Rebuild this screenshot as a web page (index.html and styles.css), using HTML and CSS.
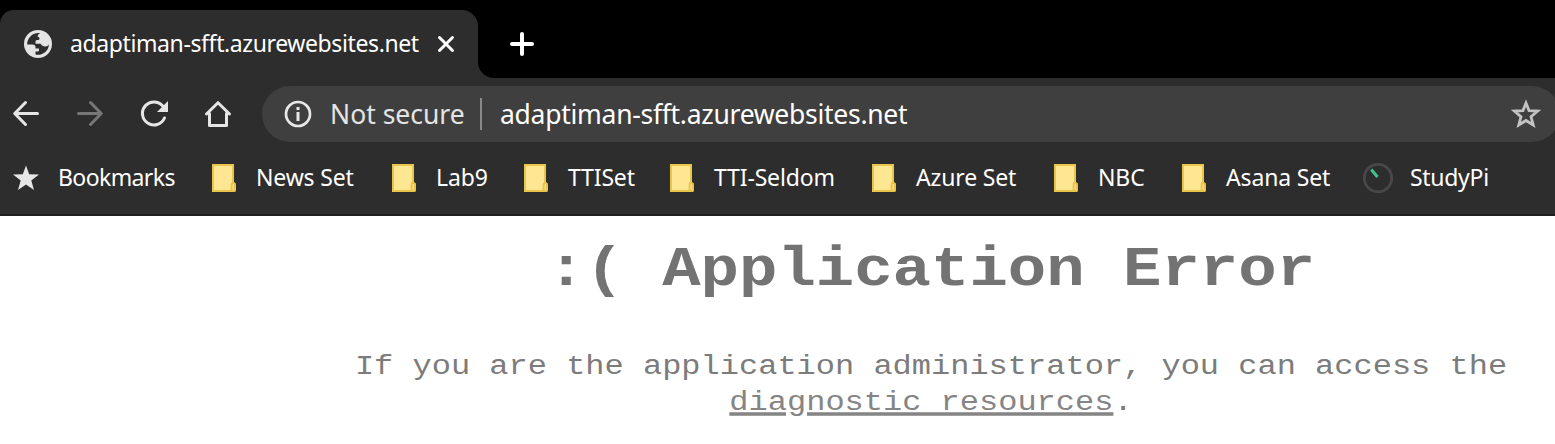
FILE: index.html
```html
<!DOCTYPE html>
<html lang="en">
<head>
<meta charset="utf-8">
<title>adaptiman-sfft.azurewebsites.net</title>
<link rel="stylesheet" href="styles.css">
</head>
<body>
<svg class="defs" width="0" height="0" aria-hidden="true">
  <symbol id="folder" viewBox="0 0 24 28">
    <path d="M1 1H21V19.500H22Q23 19.500 23 21V26Q23 27 22 27H1Z" fill="#ffe692" stroke="#eac54c" stroke-width="2"/>
    <path d="M19.500 26V21Q19.500 19 21 19H22Q23 19.500 23 21V26Q23 27 22 27H20.500Q19.500 27 19.500 26Z" fill="#fbdc7a" stroke="#e8c44b" stroke-width="1.800"/>
  </symbol>
</svg>
<header class="browser">
  <div class="tabs">
    <div class="tab">
      <svg class="globe" width="28" height="28" viewBox="0 0 28 28"><circle cx="14" cy="14" r="14" fill="#e4e4e4"/><path d="M16 3.200C9.500 2.400 4.500 6.500 3.200 13V14.500H8.500Q11.500 14.500 11.500 17V18.500H15V20.500Q15 21.500 13.500 21.500H11.500V24.600C18.500 26 24.800 21 24.900 14.500Q23.500 17 20.500 16.500Q17.500 16 16.500 13.800H11.500V11.500Q11.500 10 13 10H14.500Q15.800 9.700 15.500 8Q15.200 7 13.500 6.500Q13.800 4 16 3.200Z" fill="#2d2d2d"/></svg>
      <span class="tab-title">adaptiman-sfft.azurewebsites.net</span>
      <svg class="close" width="18" height="18" viewBox="0 0 18 18"><path d="M2.500 2.500L15.500 15.500M15.500 2.500L2.500 15.500" stroke="#fff" stroke-width="3" stroke-linecap="round"/></svg>
    </div>
    <div class="tab-side">
      <svg width="24" height="24" viewBox="0 0 24 24"><path d="M12 2V22M2 12H22" stroke="#fff" stroke-width="4" stroke-linecap="round"/></svg>
    </div>
  </div>
  <div class="toolbar">
    <div class="nav">
      <svg width="28" height="28" viewBox="0 0 28 28" fill="none" stroke="#e6e6e6" stroke-width="3" stroke-linecap="round" stroke-linejoin="round"><path d="M25.500 13.500H3M13.500 2.500L2.700 13.500L13.500 24.500"/></svg>
      <svg width="28" height="28" viewBox="0 0 28 28" fill="none" stroke="#777" stroke-width="3" stroke-linecap="round" stroke-linejoin="round"><path d="M2.500 13.500H25M14.500 2.500L25.300 13.500L14.500 24.500"/></svg>
      <svg width="28" height="28" viewBox="0 0 28 28"><path d="M23.300 6.700A11.500 11.500 0 1 0 24.500 18" fill="none" stroke="#e6e6e6" stroke-width="3" stroke-linecap="round"/><path d="M28 1V12H17Z" fill="#e6e6e6"/></svg>
      <svg width="28" height="28" viewBox="0 0 28 28" fill="none" stroke="#e6e6e6" stroke-width="3" stroke-linecap="round" stroke-linejoin="round"><path d="M2.500 14L14 2.700L25.500 14M5.500 13.500V25.500H22.500V13.500"/></svg>
    </div>
    <div class="address">
      <svg class="info" width="28" height="28" viewBox="0 0 28 28"><circle cx="14" cy="14" r="12" fill="none" stroke="#e8e8e8" stroke-width="2.700"/><path d="M12.500 7H15.500V10H12.500ZM12.500 12H15.500V21H12.500Z" fill="#e8e8e8"/></svg>
      <span class="status">Not secure</span>
      <span class="divider"></span>
      <span class="url">adaptiman-sfft.azurewebsites.net</span>
      <svg class="star" width="30" height="30" viewBox="0 0 30 30"><path d="M15 4L18 11.600L26.600 12L20 17.700L22.200 26L15 21.500L7.800 26L10 17.700L3.400 12L12 11.600Z" fill="none" stroke="#c3c3c3" stroke-width="2.800"/></svg>
    </div>
  </div>
  <nav class="bookmarks">
    <a class="bm b1"><svg width="28" height="28" viewBox="0 0 28 28"><path d="M14 1.500L17.200 10.300L27 10.600L19.300 16.500L22 26L14 20.500L6 26L8.700 16.500L1 10.600L10.800 10.300Z" fill="#e6e6e6"/></svg><span>Bookmarks</span></a>
    <a class="bm b2"><svg width="24" height="28"><use href="#folder"/></svg><span>News Set</span></a>
    <a class="bm b3"><svg width="24" height="28"><use href="#folder"/></svg><span>Lab9</span></a>
    <a class="bm b4"><svg width="24" height="28"><use href="#folder"/></svg><span>TTISet</span></a>
    <a class="bm b5"><svg width="24" height="28"><use href="#folder"/></svg><span>TTI-Seldom</span></a>
    <a class="bm b6"><svg width="24" height="28"><use href="#folder"/></svg><span>Azure Set</span></a>
    <a class="bm b7"><svg width="24" height="28"><use href="#folder"/></svg><span>NBC</span></a>
    <a class="bm b8"><svg width="24" height="28"><use href="#folder"/></svg><span>Asana Set</span></a>
    <a class="bm b9"><svg width="32" height="30" viewBox="0 0 32 30"><circle cx="16" cy="15" r="13.700" fill="none" stroke="#484848" stroke-width="2.800"/><path d="M9.300 6.500L15.500 14" stroke="#43c28a" stroke-width="3"/></svg><span>StudyPi</span></a>
  </nav>
</header>
<main class="page">
  <h1>:( Application Error</h1>
  <p>If you are the application administrator, you can access the <a>diagnostic resources</a>.</p>
</main>
</body>
</html>
```
FILE: styles.css
```css
* { box-sizing: border-box; }
body {
  margin: 0;
  width: 1555px;
  height: 444px;
  overflow: hidden;
  background: #fff;
  font-family: "Noto Sans", sans-serif;
}
svg { display: block; flex: none; }
.defs { position: absolute; }
.browser {
  height: 216px;
  background: #2d2d2d;
  border-bottom: 2px solid #1f1f1f;
}
.tabs {
  display: flex;
  height: 78px;
  padding-top: 10px;
  background: linear-gradient(#000 0 40px, transparent 40px);
}
.tab {
  display: flex;
  align-items: center;
  width: 478px;
  height: 68px;
  padding-left: 24px;
  background: #2d2d2d;
  border-radius: 14px 16px 0 0;
}
.tab-title {
  width: 350px;
  margin-left: 18px;
  padding-bottom: 2px;
  color: #fff;
  font-size: 23px;
  letter-spacing: -0.39px;
  white-space: nowrap;
}
.close { margin-left: 17px; }
.tab-side {
  flex: 1;
  height: 78px;
  margin-top: -10px;
  padding: 32px 0 0 32px;
  background: #000;
  border-bottom-left-radius: 16px;
}
.toolbar {
  display: flex;
  height: 72px;
  padding: 8px 0 8px 12px;
}
.nav {
  display: flex;
  flex: none;
  align-items: center;
  gap: 36px;
  width: 250px;
}
.address {
  display: flex;
  flex: none;
  align-items: center;
  width: 1298px;
  height: 56px;
  padding-left: 22px;
  background: #3f3f3f;
  border-radius: 28px;
  color: #fff;
  font-size: 26.500px;
  white-space: nowrap;
}
.status { width: 150px; margin-left: 18px; color: #e4e4e4; }
.divider { width: 2px; height: 32px; margin-right: 18px; background: #8a8a8a; }
.url { flex: 1; letter-spacing: -0.28px; }
.star { margin-right: 19px; }
.bookmarks {
  display: grid;
  grid-template-columns: 200px 180px 132px 146px 202px 182px 128px 180px 190px;
  height: 56px;
  padding-left: 12px;
  align-items: center;
}
.bm {
  display: flex;
  align-items: center;
  gap: 20px;
  color: #fff;
  font-size: 23px;
  letter-spacing: -0.15px;
  white-space: nowrap;
}
.bm span { padding-bottom: 2px; }
.b1 { gap: 18px; letter-spacing: -0.6px; }
.b9 { gap: 16px; letter-spacing: -0.3px; }
.page {
  width: 1240px;
  margin-left: 311px;
  color: #737373;
  font-family: "Liberation Mono", monospace;
  text-align: center;
}
h1 {
  margin: 0;
  padding-top: 16px;
  font-size: 64px;
  line-height: 72px;
  transform: scaleY(0.88);
  transform-origin: 50% 70px;
}
p {
  margin: 44px 0 0;
  color: #7c7c7c;
  font-size: 32px;
  line-height: 42px;
  transform: scaleY(0.88);
  transform-origin: top;
}
p a {
  color: #858585;
  text-decoration: underline;
  text-decoration-thickness: 3.5px;
}
```
